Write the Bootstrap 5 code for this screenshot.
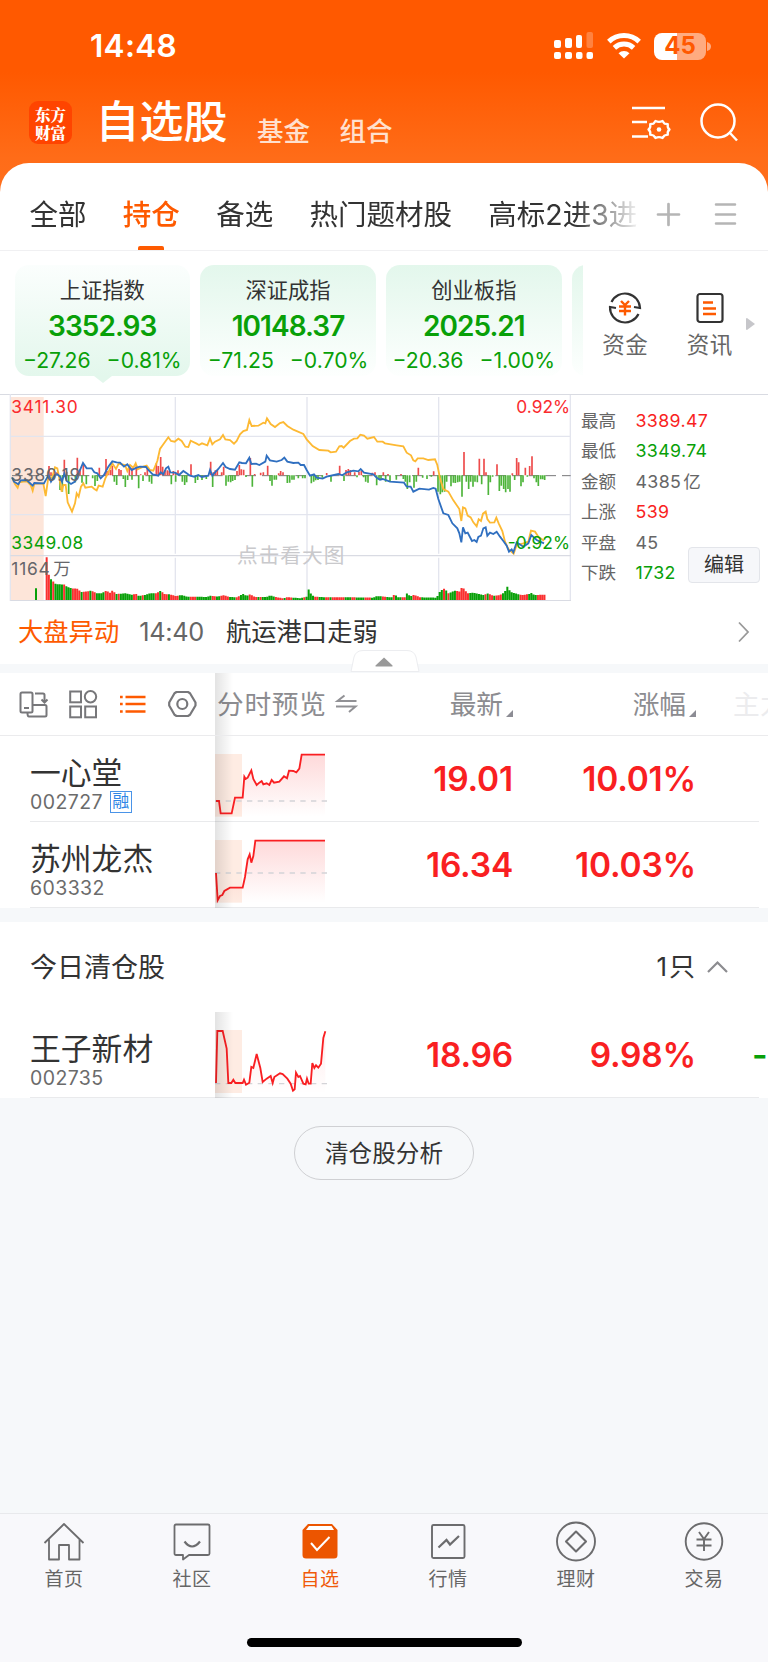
<!DOCTYPE html>
<html lang="zh-CN">
<head>
<meta charset="utf-8">
<meta name="viewport" content="width=device-width, initial-scale=1">
<title>自选股</title>
<link href="https://cdn.jsdelivr.net/npm/bootstrap@5.3.0/dist/css/bootstrap.min.css" rel="stylesheet">
<style>
  :root { --up:#f91f22; --down:#08a008; --brand:#fe5a00; --page:#f6f8fa; --ink:#333; }
  body { font-family:Inter,"Noto Sans CJK SC",sans-serif; color:var(--ink); background:var(--page); width:768px; height:1662px; overflow:hidden; line-height:1; }
  svg { display:block; flex:none; overflow:visible; }
  .up { color:var(--up); } .down { color:var(--down); }
  .top-area { background:linear-gradient(#ff5900 0,#ff5900 72px,#ff6c18 158px,#ff701e 200px); }
  .status { height:90px; padding:2px 57px 0 90px; }
  .clock { font-size:31.5px; font-weight:600; letter-spacing:.3px; }
  .battery { width:52px; height:27px; border-radius:8px; background:linear-gradient(90deg,#fff 45%,#ffab80 45%); color:#ff5900; font-size:24px; font-weight:700; }
  .title-bar { height:73px; padding:0 30px 0 29px; }
  .logo { width:43px; height:43px; border-radius:9px; background:#ff4400; font:900 15.5px/18px "Noto Serif CJK SC","Noto Sans CJK SC",serif; margin-top:-8px; }
  .main-title { font-size:44px; font-weight:500; margin:-9px 0 0 23.5px; }
  .sub-title { font-size:26.5px; font-weight:500; color:#ffe0ce; margin-top:9px; }
  .sheet { border-radius:29px 29px 0 0; background:#fff; }
  .tabs { height:88px; padding-left:29.5px; border-bottom:1px solid #f0f0f2; }
  .tab-strip { width:608px; height:87px; gap:36.3px; font-size:28.5px; white-space:nowrap; overflow:hidden; padding-top:16px; -webkit-mask-image:linear-gradient(90deg,#000 545px,transparent 612px); mask-image:linear-gradient(90deg,#000 545px,transparent 612px); }
  .tab-strip .active { color:var(--brand); font-weight:500; position:relative; }
  .tab-strip .active::after { content:""; position:absolute; left:15px; width:26px; height:4px; bottom:0; border-radius:2px 2px 0 0; background:var(--brand); }
  .tab-strip > span { height:71px; line-height:72px; }
  .indices { height:143px; padding:14px 0 0 14.5px; }
  .index-strip { flex:none; width:568.5px; height:120px; gap:10.3px; overflow:hidden; }
  .index-card { flex:none; width:175.5px; height:111px; border:0; border-radius:14px; background:linear-gradient(#e3f7ec,#fdfffe); padding-top:12px; text-align:center; white-space:nowrap; }
  .index-card.current { background:linear-gradient(#fbfefd,#e3f7ec); position:relative; }
  .index-card.current::after { content:""; position:absolute; left:79px; top:111px; border:9px solid transparent; border-top:7px solid #e3f7ec; border-bottom:0; }
  .index-name { font-size:21.3px; line-height:27px; }
  .index-price { font-size:28px; font-weight:600; line-height:44px; letter-spacing:-.95px; }
  .index-change { font-size:21.2px; line-height:25px; gap:16px; }
  .shortcut { flex:none; font-size:22.5px; color:#666; width:84.5px; padding-top:26px; }
  .shortcut div { margin-top:9px; letter-spacing:.5px; }
  .board { height:207px; border-top:1px solid #d9dbe2; }
  .figures { padding:10.5px 0 0 9px; width:196px; font-size:17.6px; color:#666; position:relative; }
  .figures > div { height:30.5px; line-height:30.5px; }
  .figures span:first-child { width:54.5px; }
  .figures .val { font-size:17.8px; letter-spacing:.35px; }
  .edit-btn { position:absolute; left:116px; top:152px; width:72px; height:36px; padding:0; font-size:20px; line-height:34px; border:1px solid #e3e5ea; border-radius:4px; background:#f6f7fa; color:#333; text-align:center; }
  .news { height:63px; padding:0 19px 2px 18px; font-size:25.3px; position:relative; }
  .fold { position:absolute; left:350px; top:49px; z-index:2; }
  .strip { height:9px; background:var(--page); }
  .quote-grid { display:grid; grid-template-columns:215px 116px 182px 183px 1fr; position:relative; white-space:nowrap; overflow:hidden; }
  .quote-grid::before { content:""; position:absolute; left:215px; top:0; bottom:0; width:18px; background:linear-gradient(90deg,rgba(0,0,0,.11),transparent); z-index:1; }
  .quote-head { height:63px; border-bottom:1px solid #ebebed; font-size:26.7px; color:#8c8c90; background:#fff; }
  .quote-row { height:86px; background:#fff; }
  .quote-row::after { content:""; position:absolute; left:30px; right:9px; bottom:0; height:1px; background:#e9eaec; }
  .stock-name { font-size:30.8px; line-height:38px; padding-top:18px; }
  .stock-code { font-size:19.5px; height:20px; line-height:20px; color:#6b6b6b; letter-spacing:.4px; }
  .margin-tag { width:22px; height:22px; border:1px solid #4a94e8; font-size:17px; line-height:19px; color:#2f86e6; letter-spacing:0; margin-left:7px; text-align:center; }
  .num { font-size:33.5px; font-weight:600; color:var(--up); text-align:right; line-height:87px; letter-spacing:-.2px; }
  .num.down { color:var(--down); }
  .section-title { height:90px; padding:0 40px 0 30px; font-size:27px; background:#fff; }
  .pill { width:180px; height:54px; border:1px solid #cfd0d3; border-radius:27px; font-size:23.6px; color:#333; padding:0; line-height:53px; }
  .bottom-nav { height:149px; border-top:1px solid #e8e9ec; background:#f8f8fb; font-size:19px; color:#666; }
  .bottom-nav .nav-item { width:128px; text-align:center; padding-top:7px; letter-spacing:.5px; }
  .bottom-nav svg { margin:0 auto 9px; }
  .home-bar { position:absolute; left:247px; bottom:15px; width:275px; height:9px; border-radius:5px; background:#000; }
</style>
</head>
<body class="d-flex flex-column position-relative">
<div class="top-area">
  <div class="status d-flex align-items-center text-white">
    <span class="clock me-auto">14:48</span>
    <svg width="39" height="28" viewBox="0 0 39 28" fill="#fff"><rect x="0" y="8" width="7" height="8" rx="2"/><rect x="11" y="6" width="7" height="10" rx="2"/><rect x="22" y="3" width="6" height="13" rx="2"/><rect x="32.500" y="0" width="6.500" height="16" rx="2" opacity=".25"/><rect x="0" y="20" width="7" height="7" rx="2"/><rect x="11" y="20" width="7" height="7" rx="2"/><rect x="22" y="20" width="6.500" height="7" rx="2"/><rect x="32.500" y="20" width="6.500" height="7" rx="2"/></svg>
    <svg style="margin:0 13px 0 14px" width="34" height="26" viewBox="0 0 34 26" fill="none" stroke="#fff" stroke-width="5"><path d="M1.800 8.600a22 22 0 0 1 30.400 0"/><path d="M7.400 14.800a14.200 14.200 0 0 1 19.200 0"/><path d="M11.500 20.200a7.800 7.800 0 0 1 11 0L17 25.500z" fill="#fff" stroke="none"/></svg>
    <div class="battery d-flex align-items-center justify-content-center">45</div>
    <svg style="margin-left:1px" width="4" height="9" viewBox="0 0 4 9"><path d="M0 0q4 1 4 4.500T0 9z" fill="#ffab80"/></svg>
  </div>
  <div class="title-bar d-flex align-items-center text-white">
    <div class="logo d-flex flex-column align-items-center justify-content-center"><span>东方</span><span>财富</span></div>
    <span class="main-title">自选股</span>
    <span class="sub-title" style="margin-left:29.500px">基金</span>
    <span class="sub-title me-auto" style="margin-left:29.500px">组合</span>
    <svg style="margin:-8px 30px 0 0" width="38" height="34" viewBox="0 0 38 34" fill="none" stroke="#fff" stroke-width="2.300"><path d="M0 2h33M0 16h15M0 30.500h16"/><path d="M23.500 15q3.500 1.600 7 0l2 2.600 3.300.6q-.7 3.400 1.700 5.300-2.400 2-1.700 5.200l-3.300.8-2 2.500q-3.500-1.600-7 0l-2-2.500-3.300-.8q.7-3.200-1.700-5.200 2.400-1.900 1.700-5.300l3.300-.6z" stroke-linejoin="round"/><circle cx="27" cy="23.500" r="2.300" fill="#fff" stroke="none"/></svg>
    <svg style="margin-top:-9px" width="38" height="38" viewBox="0 0 38 38" fill="none" stroke="#fff" stroke-width="2.500"><circle cx="18" cy="18" r="16.500"/><path d="M29.500 29.500l7.500 8"/></svg>
  </div>
  <div class="sheet">
    <nav class="tabs d-flex align-items-center">
      <div class="tab-strip d-flex"><span>全部</span><span class="active">持仓</span><span>备选</span><span>热门题材股</span><span>高标2进3进4</span></div>
      <svg style="margin:16px 0 0 19px" width="23" height="23" viewBox="0 0 23 23" stroke="#b5b5b5" stroke-width="2.700" stroke-linecap="round"><path d="M1 11.500h21M11.500 1v21"/></svg>
      <svg style="margin:16px 0 0 34px" width="23" height="23" viewBox="0 0 23 23" stroke="#b5b5b5" stroke-width="2.500" stroke-linecap="round"><path d="M2 1.500h19M2 11.500h19M2 20.500h19"/></svg>
    </nav>
  </div>
</div>

<section class="indices d-flex bg-white">
  <div class="index-strip d-flex">
    <div class="index-card current"><div class="index-name">上证指数</div><div class="index-price down">3352.93</div><div class="index-change down d-flex justify-content-center"><span>−27.26</span><span>−0.81%</span></div></div>
    <div class="index-card"><div class="index-name">深证成指</div><div class="index-price down">10148.37</div><div class="index-change down d-flex justify-content-center"><span>−71.25</span><span>−0.70%</span></div></div>
    <div class="index-card"><div class="index-name">创业板指</div><div class="index-price down">2025.21</div><div class="index-change down d-flex justify-content-center"><span>−20.36</span><span>−1.00%</span></div></div>
    <div class="index-card"></div>
  </div>
  <div class="shortcut d-flex flex-column align-items-center">
    <svg width="34" height="34" viewBox="0 0 34 34" fill="none" stroke="#333" stroke-width="2.200"><path d="M3.500 11A15 15 0 0 1 32 17l-6-1M30.500 23A15 15 0 0 1 2 16l6 1"/><path d="M13 10l4 4 4-4M11 15.500h12M11 20h12M17 14v10.500" stroke="#fe5a00" stroke-width="2.400"/></svg>
    <div>资金</div>
  </div>
  <div class="shortcut d-flex flex-column align-items-center">
    <svg width="34" height="34" viewBox="0 0 34 34" fill="none" stroke="#333" stroke-width="2.200"><rect x="4.500" y="3" width="25" height="28" rx="2.500"/><path d="M10 11.500h10M10 17.500h13M10 23h13" stroke="#fe5a00" stroke-width="2.300"/></svg>
    <div>资讯</div>
  </div>
  <svg style="margin:53px 0 0 -6px" width="9" height="12" viewBox="0 0 9 12"><path d="M1 0l8 6-8 6q-1 0-1-1V1q0-1 1-1z" fill="#c6c6ca"/></svg>
</section>

<section class="board d-flex bg-white">
  <svg id="market" style="margin-left:10px" width="562" height="208" viewBox="30 30 1686 624" font-size="52" fill="none">
    <rect x="33" y="36" width="98" height="610" fill="#fde5d9"/>
    <path d="M31 27V648M1711 30V646M31 154H1711M31 389H1711" stroke="#e3e5ee" stroke-width="4"/>
    <path d="M526 36V506M526 518V645M921 36V506M921 518V645M1316 36V506M1316 518V645" stroke="#e3e5ee" stroke-width="4"/>
    <path d="M31 512H1713M31 647H1713" stroke="#d9dbe3" stroke-width="4"/>
    <path d="M36 272H1712" stroke="#77777a" stroke-width="3" stroke-dasharray="32 18"/>
    <path id="barsUp" stroke="#ee4b4b" stroke-width="5"/><path id="barsDown" stroke="#4db43a" stroke-width="5"/>
    <path id="volUp" stroke="#fa3030" stroke-width="6"/><path id="volDown" stroke="#08a008" stroke-width="6"/>
    <text x="711" y="535" font-size="62" fill="#c9c9cc" textLength="322">点击看大图</text>
    <polyline stroke="#fdb933" stroke-width="5.500" points="36,277 45,297 53,308 58,292 70,290 82,290 92,300 98,317 103,296 130,296 137,333 146,270 155,282 165,247 172,250 180,290 185,320 190,300 197,300 203,352 216,380 225,355 230,325 236,335 243,305 250,295 256,308 275,305 283,312 290,316 296,302 308,305 316,280 325,262 337,235 348,252 356,236 375,240 382,258 390,240 400,248 407,235 413,253 430,245 440,242 450,255 460,257 472,228 480,192 490,178 505,157 513,168 524,170 535,161 545,168 556,185 565,186 572,167 590,176 597,180 606,175 622,181 630,160 637,178 645,170 660,163 669,150 676,163 690,165 702,176 710,168 720,148 730,138 741,135 748,105 755,123 775,122 790,113 796,115 801,100 812,117 825,126 840,114 850,111 862,123 880,134 910,147 920,163 938,183 958,195 985,197 992,202 1008,200 1018,184 1025,183 1031,188 1050,168 1062,161 1072,160 1081,149 1092,152 1102,161 1122,156 1132,170 1148,170 1155,175 1190,181 1210,184 1220,203 1233,211 1240,226 1246,229 1253,220 1270,220 1285,225 1305,223 1312,240 1320,280 1330,312 1345,320 1360,346 1378,372 1384,408 1389,367 1396,370 1403,392 1412,397 1420,412 1430,424 1436,403 1443,408 1449,386 1457,380 1462,402 1470,413 1483,412 1489,398 1496,415 1507,438 1515,470 1525,492 1541,506 1550,480 1570,475 1585,470 1593,437 1605,440 1615,455 1632,467"/>
    <polyline stroke="#2f6fc0" stroke-width="5.500" points="36,277 42,290 55,298 62,286 80,285 98,302 103,294 132,295 140,280 146,270 153,290 165,270 172,268 180,275 186,290 193,265 200,288 213,297 225,290 232,270 240,255 249,234 260,250 275,250 283,262 292,265 302,280 312,270 325,245 337,229 350,232 360,233 372,245 382,238 395,255 410,248 420,245 438,246 445,255 458,268 475,272 482,262 490,268 498,250 505,245 511,262 525,263 537,270 550,258 560,265 570,272 583,275 595,270 605,276 625,272 630,255 637,272 645,262 655,252 669,234 677,246 690,252 705,254 718,232 726,234 738,235 748,218 754,237 768,236 778,240 796,230 800,212 810,226 830,230 845,225 853,218 862,230 880,234 895,233 902,240 912,240 920,255 930,272 942,268 950,278 968,281 980,275 1015,267 1027,271 1040,262 1060,257 1075,259 1082,252 1092,263 1120,268 1132,280 1140,284 1148,282 1170,290 1212,293 1220,305 1232,305 1240,320 1258,311 1287,314 1300,309 1307,311 1315,342 1330,385 1345,390 1357,415 1372,430 1378,445 1384,472 1389,427 1396,445 1403,443 1416,468 1423,465 1430,471 1435,456 1443,452 1450,430 1457,427 1462,452 1470,443 1480,447 1490,440 1500,455 1510,468 1520,482 1527,500 1535,493 1540,502 1550,472 1570,485 1585,475 1594,450 1610,465 1632,475"/>
    <text x="34" y="84" fill="#fa2b2e" textLength="199">3411.30</text>
    <text x="34" y="288" fill="#66666a" textLength="207">3380.19</text>
    <text x="34" y="492" fill="#08a008" textLength="216">3349.08</text>
    <text x="34" y="569" fill="#66666a" textLength="115">1164</text>
    <text x="160" y="569" fill="#66666a">万</text>
    <text x="1710" y="84" fill="#fa2b2e" text-anchor="end" textLength="161">0.92%</text>
    <text x="1710" y="492" fill="#08a008" text-anchor="end" textLength="187">-0.92%</text>
  </svg>
  <div class="figures">
    <div class="d-flex"><span>最高</span><span class="val up">3389.47</span></div>
    <div class="d-flex"><span>最低</span><span class="val down">3349.74</span></div>
    <div class="d-flex"><span>金额</span><span class="val">4385</span><span style="margin-left:2px">亿</span></div>
    <div class="d-flex"><span>上涨</span><span class="val up">539</span></div>
    <div class="d-flex"><span>平盘</span><span class="val">45</span></div>
    <div class="d-flex"><span>下跌</span><span class="val down">1732</span></div>
    <button class="btn edit-btn">编辑</button>
  </div>
</section>

<section class="news d-flex align-items-center bg-white">
  <span style="color:var(--brand)">大盘异动</span>
  <span style="margin-left:20px;color:#666;letter-spacing:-.3px">14:40</span>
  <span class="me-auto" style="margin-left:22px">航运港口走弱</span>
  <svg width="11" height="20" viewBox="0 0 11 20" fill="none" stroke="#999" stroke-width="1.800"><path d="M1 .5l9 9.500-9 9.500"/></svg>
  <svg class="fold" width="70" height="22" viewBox="0 0 70 22"><path d="M1 21.500L4 7Q6 .5 13 .5H57Q64 .5 66 7L69 21.500" fill="#fff" stroke="#ecedf0"/><path d="M1 21.500H69" stroke="#ecedf0"/><path d="M34 7.500L42.500 15.500Q43 16.500 42 16.500H26Q25 16.500 25.500 15.500z" fill="#999"/></svg>
</section>
<div class="strip"></div>

<section>
  <div class="quote-grid quote-head align-items-center">
    <div class="d-flex align-items-center" style="padding-left:19px">
      <svg width="29" height="27" viewBox="0 0 29 27" fill="none" stroke="#77777a" stroke-width="2"><rect x="1.500" y="1.500" width="12" height="20" rx="1.500"/><path d="M5 17h5M16 2.500h8q1.500 0 1.500 1.500v7M22.500 8.500l3 3 3-3M13.500 14H26q1.500 0 1.500 1.500V24q0 1.500-1.500 1.500H10Q8.500 25.500 8.500 22"/></svg>
      <svg style="margin-left:21px" width="28" height="28" viewBox="0 0 28 28" fill="none" stroke="#77777a" stroke-width="2"><rect x="1.200" y="1.500" width="10.800" height="10.800"/><circle cx="21.500" cy="6.800" r="5.700"/><rect x="1.200" y="16.500" width="10.800" height="10.800"/><rect x="16.200" y="16.500" width="10.800" height="10.800"/></svg>
      <svg style="margin-left:23px" width="26" height="20" viewBox="0 0 26 20" stroke="#fe5a00" stroke-width="2.700"><path d="M5.500 3H25.500M5.500 10H25.500M5.500 17.500H25.500M0 3h2.700M0 10h2.700M0 17.500h2.700"/></svg>
      <svg style="margin-left:22px" width="29" height="26" viewBox="0 0 29 26" fill="none" stroke="#77777a" stroke-width="2.200" stroke-linejoin="round"><path d="M8.500 1h11.500l2 1.200 5.500 9.300v3L22 23.800 20 25H8.500l-2-1.200L1.200 14.500v-3L6.500 2.200z"/><circle cx="14.300" cy="13" r="5"/></svg>
    </div>
    <div class="d-flex align-items-center" style="padding-left:2px"><span style="letter-spacing:.7px">分时预览</span><svg style="margin-left:9.500px" width="21" height="18" viewBox="0 0 21 18" fill="none" stroke="#919195" stroke-width="2"><path d="M20.500 6H1.500L8.500.5M0 11.500H19.500L13 17"/></svg></div>
    <div class="d-flex justify-content-end"><span>最新</span><svg class="align-self-end" style="margin:0 0 0 3px" width="7" height="7" viewBox="0 0 7 7"><path d="M7 0v7H0z" fill="#8c8c94"/></svg></div>
    <div class="d-flex justify-content-end"><span>涨幅</span><svg class="align-self-end" style="margin:0 0 0 3px" width="7" height="7" viewBox="0 0 7 7"><path d="M7 0v7H0z" fill="#8c8c94"/></svg></div>
    <div style="padding-left:37px;color:#ececee">主力</div>
  </div>
  <div class="quote-grid quote-row">
    <div style="padding-left:30px"><div class="stock-name">一心堂</div><div class="stock-code d-flex align-items-center">002727<span class="margin-tag">融</span></div></div>
    <svg width="115" height="86" viewBox="645 3 345 258" fill="none">
      <defs><linearGradient id="rise" x1="0" y1="57" x2="0" y2="245" gradientUnits="userSpaceOnUse"><stop stop-color="#f91f22" stop-opacity=".17"/><stop offset="1" stop-color="#f91f22" stop-opacity="0"/></linearGradient></defs>
      <rect x="645" y="57" width="81" height="188" fill="#feece3"/>
      <path d="M648 245V198H657L662 235H695L705 188H728L733 125 743 128 754 106 760 132 770 150 785 138 808 150 815 135 838 140 852 124 861 130 867 107 889 112 898 101 905 59H975V245z" fill="url(#rise)"/>
      <path d="M645 198H985" stroke="#d4d4d8" stroke-width="4" stroke-dasharray="16 16"/>
      <polyline points="648,198 657,198 662,235 695,235 705,188 728,188 733,125 737,132 743,128 754,106 760,132 770,150 778,143 785,138 790,148 800,145 808,150 815,135 822,143 838,140 852,124 861,130 867,107 880,108 889,112 898,101 905,59 975,59" stroke="#f91f22" stroke-width="5.500"/>
    </svg>
    <div class="num">19.01</div><div class="num">10.01%</div><div></div>
  </div>
  <div class="quote-grid quote-row">
    <div style="padding-left:30px"><div class="stock-name">苏州龙杰</div><div class="stock-code">603332</div></div>
    <svg width="115" height="86" viewBox="645 3 345 258" fill="none">
      <rect x="645" y="57" width="81" height="188" fill="#feece3"/>
      <path d="M648 245V156L653 238 667 222 673 210 690 200H728L735 168 743 115 749 100 754 125 760 105 766 59H975V245z" fill="url(#rise)"/>
      <path d="M645 156H985" stroke="#d4d4d8" stroke-width="4" stroke-dasharray="16 16"/>
      <polyline points="648,156 653,238 660,225 667,222 673,210 690,200 728,200 735,168 743,115 749,100 754,125 760,105 766,59 975,59" stroke="#f91f22" stroke-width="5.500"/>
    </svg>
    <div class="num">16.34</div><div class="num">10.03%</div><div></div>
  </div>
</section>
<div class="strip" style="height:14px"></div>

<section>
  <div class="section-title d-flex align-items-center"><span class="me-auto">今日清仓股</span><span style="font-size:26px">1</span><span style="font-size:26px;margin-left:2px">只</span><svg style="margin-left:12px" width="21" height="12" viewBox="0 0 21 12" fill="none" stroke="#8c8c90" stroke-width="2.200"><path d="M1 11l9.500-9.500L20 11"/></svg></div>
  <div class="quote-grid quote-row">
    <div style="padding-left:30px"><div class="stock-name">王子新材</div><div class="stock-code">002735</div></div>
    <svg width="115" height="86" viewBox="645 0 345 258" fill="none">
      <rect x="645" y="54" width="81" height="189" fill="#feece3"/>
      <path d="M728 243V213L748 212 754 165 770 126 788 210 812 192 840 184 872 215 888 182 917 217 932 215 937 153 955 167 963 155 976 58V243z" fill="url(#rise)" opacity=".55"/>
      <path d="M645 215H985" stroke="#d4d4d8" stroke-width="4" stroke-dasharray="16 16"/>
      <polyline points="648,213 652,57 668,57 680,110 685,213 694,213 700,203 706,213 728,213 732,203 738,218 748,212 754,165 760,168 770,126 781,168 788,210 800,200 812,192 818,213 823,195 840,184 848,186 862,200 872,215 879,236 884,232 888,182 895,195 900,192 910,215 917,217 921,200 926,215 932,215 937,153 943,168 948,160 955,167 963,155 970,78 976,58" stroke="#f91f22" stroke-width="5.500"/>
    </svg>
    <div class="num">18.96</div><div class="num">9.98%</div><div class="num down text-start" style="padding-left:56px">-</div>
  </div>
</section>
<div class="text-center" style="padding-top:28px"><button class="btn pill">清仓股分析</button></div>

<nav class="bottom-nav d-flex mt-auto">
  <div class="nav-item"><svg width="40" height="40" viewBox="0 0 40 40" fill="none" stroke="#6c6c6e" stroke-width="1.800" stroke-linejoin="round"><path d="M.5 22L20 3 39.500 22M5 18.500V38.500H15V24H25V38.500H35.500V18.500"/></svg>首页</div>
  <div class="nav-item"><svg width="40" height="40" viewBox="0 0 40 40" fill="none" stroke="#6c6c6e" stroke-width="1.800" stroke-linejoin="round"><path d="M4 3.500H36Q37.500 3.500 37.500 5V32.500Q37.500 34 36 34H17L11 38.500V34H4Q2.500 34 2.500 32.500V5Q2.500 3.500 4 3.500z"/><path d="M12.500 20.500q7.500 10 15.500 0" stroke-width="2.200"/></svg>社区</div>
  <div class="nav-item" style="color:#f05a0a"><svg width="40" height="40" viewBox="0 0 40 40"><path d="M8 3H32L37.500 9V34Q37.500 37.500 34 37.500H6Q2.500 37.500 2.500 34V9z" fill="#ec5500"/><path d="M9 5H31.500L34 9H6z" fill="#fff"/><path d="M11 22l6 7 12.500-13" fill="none" stroke="#fff" stroke-width="2"/></svg>自选</div>
  <div class="nav-item"><svg width="40" height="40" viewBox="0 0 40 40" fill="none" stroke="#6c6c6e" stroke-width="1.900"><rect x="4" y="4" width="32.500" height="33" rx="1.500"/><path d="M10.500 26.500l8-7.500 3.500 4.500 9-8.500" stroke-width="2.200"/></svg>行情</div>
  <div class="nav-item"><svg width="40" height="40" viewBox="0 0 40 40" fill="none" stroke="#6c6c6e" stroke-width="1.900" stroke-linejoin="round"><circle cx="20" cy="20.500" r="19"/><path d="M20 10.500L30 20.500 20 30.500 10 20.500z" stroke-width="2.100"/></svg>理财</div>
  <div class="nav-item"><svg width="40" height="40" viewBox="0 0 40 40" fill="none" stroke="#6c6c6e" stroke-width="1.900"><circle cx="20" cy="20.500" r="18.300"/><path d="M15 11l5 7 5-7M12.500 18.500h15M12.500 24.500h15M20 18v12"/></svg>交易</div>
</nav>
<div class="home-bar"></div>

<script src="https://cdn.jsdelivr.net/npm/bootstrap@5.3.0/dist/js/bootstrap.bundle.min.js"></script>
<script>
  // Minute bars: "x:y" pairs drawn from the previous-close line.
  const up = "147:243,153:262,162:258,171:262,193:224,200:260,232:218,240:256,250:240,298:248,318:222,324:258,331:255,337:242,357:252,363:255,388:240,396:248,409:240,422:268,435:262,442:248,469:235,475:243,482:216,488:245,495:256,502:256,508:258,520:258,527:262,534:256,573:238,632:230,640:262,646:256,652:255,665:262,671:245,711:258,718:240,724:253,731:254,751:219,764:267,782:263,790:262,803:242,836:265,842:258,849:262,980:264,1019:242,1038:255,1045:252,1051:255,1064:262,1077:260,1084:258,1117:263,1125:262,1150:262,1164:267,1203:267,1255:248,1301:259,1392:201,1438:221,1452:221,1458:262,1491:238,1537:265,1550:219,1556:232,1576:248,1589:243,1596:214";
  const down = "180:315,187:320,206:327,226:292,246:293,259:298,278:280,285:303,292:288,343:290,350:300,370:282,376:306,383:285,396:284,416:310,429:288,448:290,455:296,514:298,527:290,547:290,554:300,560:292,586:294,593:285,606:285,619:282,638:306,678:302,685:290,692:292,698:288,705:285,738:276,757:305,810:288,816:302,823:284,829:284,862:294,869:293,876:284,882:284,895:280,908:280,915:280,934:295,941:290,947:286,954:285,967:278,993:290,1032:288,1071:277,1091:277,1097:290,1104:293,1130:301,1137:282,1143:282,1157:290,1170:289,1189:284,1210:282,1216:290,1222:312,1229:292,1242:308,1249:290,1268:278,1281:282,1294:275,1314:320,1321:328,1327:322,1334:320,1340:290,1353:304,1360:293,1366:294,1373:292,1379:290,1386:335,1399:290,1406:312,1412:290,1419:305,1425:290,1432:292,1445:298,1465:330,1471:292,1478:275,1498:318,1504:302,1511:312,1517:322,1524:312,1530:320,1544:285,1563:304,1569:292,1582:275,1602:280,1609:292,1615:303,1622:283,1628:283,1634:285";
  const bars = s => s.split(",").map(p => { const [x, y] = p.split(":"); return `M${x} 271V${y}`; }).join("");
  barsUp.setAttribute("d", bars(up));
  barsDown.setAttribute("d", bars(down));

  // Volume envelope (x:height) and the colour run lengths, starting with a rising run.
  const env = "140:128,147:72,153:62,160:55,167:48,195:46,200:40,215:35,232:34,243:24,260:26,275:28,290:20,305:20,318:28,330:22,337:28,350:18,376:20,395:16,409:18,416:12,435:15,450:20,469:20,482:28,495:17,510:17,527:12,545:15,560:10,590:10,620:9,632:13,650:10,671:14,690:9,710:8,731:19,738:12,751:17,765:9,800:9,810:14,830:8,850:5,862:9,900:5,910:8,920:10,927:35,933:18,942:10,985:8,1060:8,1120:7,1130:12,1175:8,1183:17,1195:8,1217:8,1222:23,1230:10,1242:16,1260:8,1310:7,1316:20,1322:28,1334:35,1345:20,1365:28,1380:25,1386:40,1393:32,1402:20,1420:22,1450:15,1465:20,1480:12,1500:15,1512:22,1518:30,1524:44,1530:25,1545:20,1565:15,1590:18,1596:22,1602:15,1640:16".split(",").map(p => p.split(":").map(Number));
  const runs = [2,1,1,4,1,3,4,1,3,1,2,4,5,1,1,6,2,2,1,5,2,1,3,1,4,5,3,7,2,2,4,3,2,4,4,1,1,6,4,1,3,5,1,4,2,3,2,1,6,3,2,4,3,5,2,3,1,3,2,3,4,10,1,1,1,3,6,7,1,1,2,1,3,8];
  let k = 0, left = runs[0], v = ["", ""];
  for (let x = 140; x < 1638; x += 6.55) {
    let i = env.findIndex(p => p[0] >= x); if (i < 1) i = 1;
    const [a, b] = [env[i - 1], env[i]];
    const h = a[1] + (b[1] - a[1]) * (x - a[0]) / (b[0] - a[0]);
    v[k % 2] += `M${x.toFixed(1)} 645V${(645 - h).toFixed(1)}`;
    if (--left <= 0) { k++; left = runs[k] || 4; }
  }
  volUp.setAttribute("d", v[0]);
  volDown.setAttribute("d", v[1] + "M108 645V610");
</script>
</body>
</html>
